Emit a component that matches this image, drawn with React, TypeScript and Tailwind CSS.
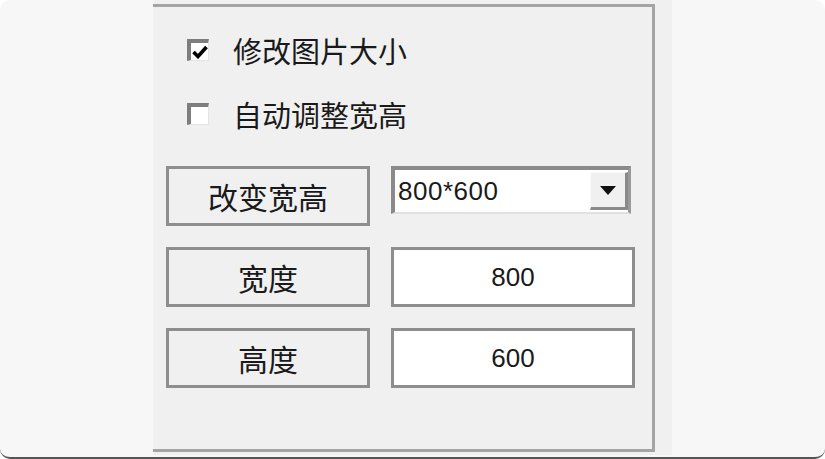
const cjk = "font-['Noto_Sans_CJK_SC',sans-serif]";
const num = "font-['Liberation_Sans',Arial,sans-serif]";

const CheckRow = ({ label, checked }: { label: string; checked?: boolean }) => (
	<div className="flex h-[32px] items-center">
		<div className="ml-[34px] flex h-[22px] w-[22px] items-center justify-center border-t-[4px] border-l-[4px] border-r border-b border-t-[#7e7e7e] border-l-[#7e7e7e] border-r-[#e4e4e4] border-b-[#e4e4e4] bg-white">
			{checked && (
				<svg width="16" height="14" viewBox="0 0 16 14">
					<path d="M1.5 7 L6 11.5 L14.5 2" fill="none" stroke="#000" strokeWidth="3.6" />
				</svg>
			)}
		</div>
		<span className={`ml-[24px] text-[29px] leading-none text-[#1a1a1a] ${cjk}`}>{label}</span>
	</div>
);

const Btn = ({ label }: { label: string }) => (
	<div
		className={`flex h-[60px] w-[204px] items-center justify-center border-[3px] border-[#8e8e8e] bg-[#f0f0f0] text-[30px] leading-none text-[#1a1a1a] ${cjk}`}
	>
		{label}
	</div>
);

const Field = ({ value }: { value: string }) => (
	<div
		className={`flex h-[60px] w-[244px] items-center justify-center border-[3px] border-[#8e8e8e] bg-white text-[26px] leading-none text-[#1a1a1a] ${num}`}
	>
		{value}
	</div>
);

export default function App() {
	return (
		<div className="flex h-[459px] w-[825px] overflow-hidden rounded-[10px] border-b-2 border-[#555] bg-[#f7f7f7]">
			<div className="ml-[153px] h-[455px] w-[519px] bg-[#f0f0f0] pt-[4px]">
				<div className="flex h-[448px] w-[502px] flex-col border-t-[3px] border-r-[3px] border-b-[3px] border-[#a4a4a4]">
					<div className="mt-[27px] flex flex-col gap-[32px]">
						<CheckRow label="修改图片大小" checked />
						<CheckRow label="自动调整宽高" />
					</div>
					<div className="mt-[36px] ml-[13px] flex flex-col gap-[21px]">
						<div className="flex items-start gap-[21px]">
							<Btn label="改变宽高" />
							<div className="flex h-[48px] w-[240px] items-center border-t-[4px] border-l-[4px] border-r-[3px] border-b-[2px] border-t-[#8a8a8a] border-l-[#8a8a8a] border-r-[#9a9a9a] border-b-[#e0e0e0] bg-white">
								<span className={`ml-[3px] flex-1 text-[26px] leading-none tracking-[0.5px] text-[#1a1a1a] ${num}`}>800*600</span>
								<div className="flex h-[38px] w-[38px] items-center justify-center border-t border-l border-r-[3px] border-b-[3px] border-t-[#fafafa] border-l-[#fafafa] border-r-[#8a8a8a] border-b-[#8a8a8a] bg-[#f0f0f0]">
									<svg width="16" height="9" viewBox="0 0 16 9">
										<path d="M0 0 H16 L8 9 Z" fill="#111" />
									</svg>
								</div>
							</div>
						</div>
						<div className="flex gap-[21px]">
							<Btn label="宽度" />
							<Field value="800" />
						</div>
						<div className="flex gap-[21px]">
							<Btn label="高度" />
							<Field value="600" />
						</div>
					</div>
				</div>
			</div>
		</div>
	);
}
